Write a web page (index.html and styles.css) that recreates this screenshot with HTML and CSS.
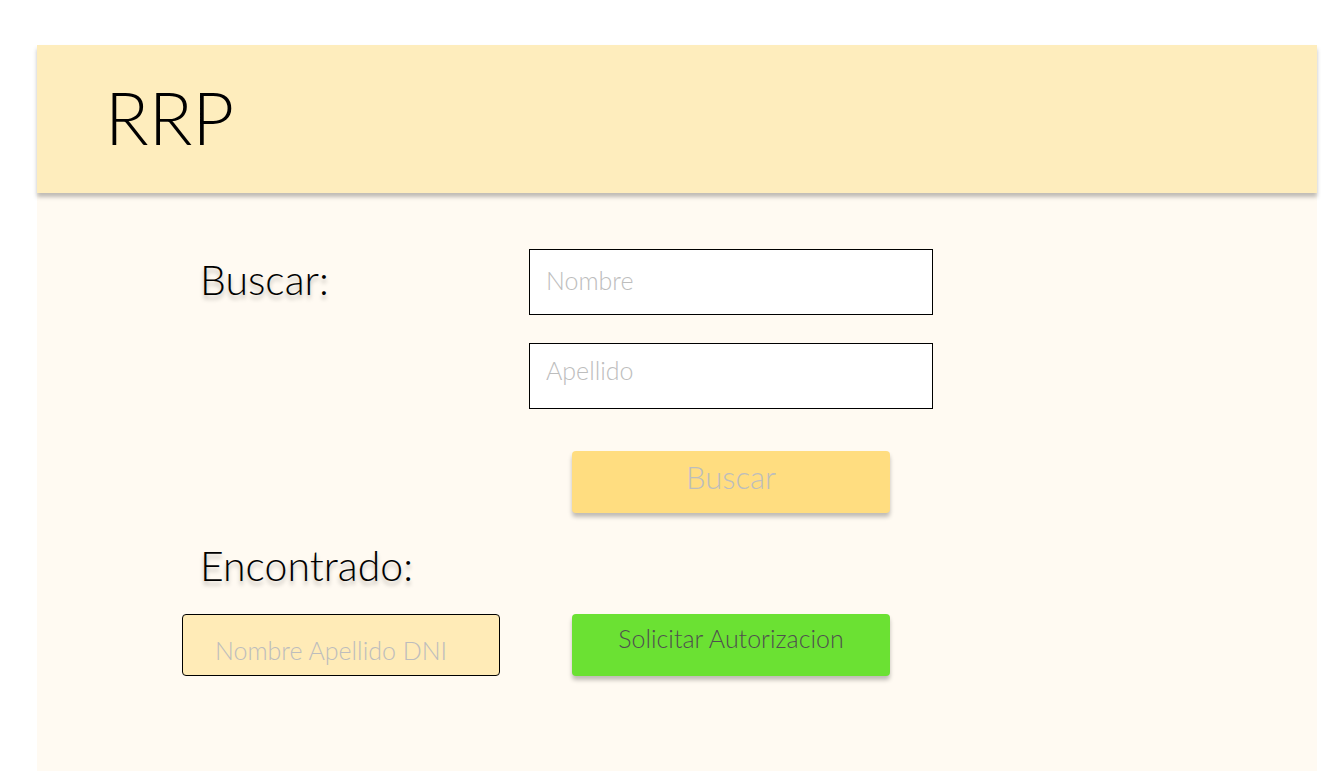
FILE: index.html
```html
<!DOCTYPE html>
<html lang="es">
<head>
<meta charset="utf-8">
<meta name="viewport" content="width=device-width, initial-scale=1">
<title>RRP</title>
<link rel="stylesheet" href="styles.css">
</head>
<body>
<div class="page">
  <header class="banner"><h1 class="brand">RRP</h1></header>
  <main class="content">
    <form class="section">
      <h2 class="heading">Buscar:</h2>
      <div class="fields">
        <input class="field" type="text" placeholder="Nombre" aria-label="Nombre">
        <input class="field field-last" type="text" placeholder="Apellido" aria-label="Apellido">
        <button class="button button-search" type="button">Buscar</button>
      </div>
    </form>
    <section class="results">
      <h2 class="heading">Encontrado:</h2>
      <div class="section">
        <input class="result" type="text" placeholder="Nombre Apellido DNI" aria-label="Nombre Apellido DNI" readonly>
        <button class="button button-request" type="button">Solicitar Autorizacion</button>
      </div>
    </section>
  </main>
</div>
</body>
</html>
```
FILE: styles.css
```css
* {
  box-sizing: border-box;
}

body {
  margin: 0;
  background: #fff;
  font-family: Lato, "Open Sans", sans-serif;
  font-weight: 300;
}

.page {
  display: flex;
  flex-direction: column;
  min-height: 100vh;
  padding: 45px 4px 0 37px;
}

.banner {
  position: relative;
  padding: 32px 68px 36px;
  background: #feedbd;
  box-shadow: 0 4px 4px rgba(0, 0, 0, 0.25);
}

.brand {
  margin: 0;
  font-size: 72px;
  line-height: 80px;
  font-weight: 300;
}

.content {
  flex: 1;
  padding: 56px 145px 40px;
  background: #fffaf2;
}

.section {
  display: grid;
  grid-template-columns: minmax(0, 318px) minmax(0, 404px);
  column-gap: 29px;
}

.heading {
  margin: 0;
  padding-left: 18px;
  font-size: 41px;
  line-height: 62px;
  font-weight: 300;
  text-shadow: 0 4px 4px rgba(0, 0, 0, 0.25);
}

.fields {
  display: flex;
  flex-direction: column;
}

.field,
.result {
  width: 100%;
  border: 1px solid #000;
  color: #222;
  font: inherit;
  font-size: 25px;
}

.field {
  height: 66px;
  margin-bottom: 28px;
  padding: 0 16px 4px;
  background: #fff;
}

.field-last {
  margin-bottom: 42px;
  padding-bottom: 12px;
}

.field::placeholder,
.result::placeholder {
  color: #bdbdbd;
  opacity: 1;
}

.button {
  justify-self: center;
  align-self: center;
  width: 100%;
  max-width: 318px;
  height: 62px;
  padding: 0 8px 10px;
  border: 0;
  border-radius: 4px;
  box-shadow: 0 4px 4px rgba(0, 0, 0, 0.25);
  font: inherit;
  cursor: pointer;
}

.button-search {
  background: #ffdd80;
  color: #bdbdbd;
  font-size: 31px;
}

.button-request {
  padding-bottom: 14px;
  background: #6be133;
  color: #4f4f4f;
  font-size: 25px;
}

.results {
  padding-top: 22px;
}

.results .heading {
  margin-bottom: 17px;
}

.result {
  height: 62px;
  padding: 10px 32px 0;
  border-radius: 4px;
  background: #ffebb7;
}
```
